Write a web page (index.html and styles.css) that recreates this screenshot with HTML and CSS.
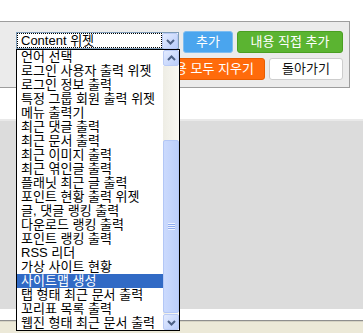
FILE: index.html
```html
<!DOCTYPE html>
<html lang="ko">
<head>
<meta charset="utf-8">
<title>위젯 추가</title>
<link rel="stylesheet" href="styles.css">
</head>
<body>
<div class="page">
  <div class="top-gap"></div>
  <div class="toolbar">
    <div class="select">
      <span class="select-value"><span class="focus">Content 위젯</span></span>
      <span class="sb-btn drop-btn"><svg width="13" height="13" viewBox="0 0 13 13"><path d="M3 5 L6.5 8.5 L10 5" fill="none" stroke="#4d6185" stroke-width="2"/></svg></span>
    </div>
    <div class="actions">
      <div class="row">
        <button class="btn btn-blue w-add">추가</button>
        <button class="btn btn-green w-direct">내용 직접 추가</button>
      </div>
      <div class="row">
        <button class="btn btn-orange w-clear">내용 모두 지우기</button>
        <button class="btn btn-white w-back">돌아가기</button>
      </div>
    </div>
  </div>
  <div class="gap-white"></div>
  <div class="editor"></div>
  <div class="gap-bottom"></div>
  <div class="statusbar"></div>

  <div class="listbox">
    <ul class="options">
      <li>언어 선택</li>
      <li>로그인 사용자 출력 위젯</li>
      <li>로그인 정보 출력</li>
      <li>특정 그룹 회원 출력 위젯</li>
      <li>메뉴 출력기</li>
      <li>최근 댓글 출력</li>
      <li>최근 문서 출력</li>
      <li>최근 이미지 출력</li>
      <li>최근 엮인글 출력</li>
      <li>플래닛 최근 글 출력</li>
      <li>포인트 현황 출력 위젯</li>
      <li>글, 댓글 랭킹 출력</li>
      <li>다운로드 랭킹 출력</li>
      <li>포인트 랭킹 출력</li>
      <li>RSS 리더</li>
      <li>가상 사이트 현황</li>
      <li class="selected">사이트맵 생성</li>
      <li>탭 형태 최근 문서 출력</li>
      <li>꼬리표 목록 출력</li>
      <li>웹진 형태 최근 문서 출력</li>
    </ul>
    <div class="scrollbar">
      <span class="sb-btn"><svg width="13" height="13" viewBox="0 0 13 13"><path d="M3 8 L6.5 4.5 L10 8" fill="none" stroke="#4d6185" stroke-width="2"/></svg></span>
      <div class="track">
        <div class="track-space"></div>
        <div class="thumb"><span class="grip"></span></div>
        <div class="track-end"></div>
      </div>
      <span class="sb-btn"><svg width="13" height="13" viewBox="0 0 13 13"><path d="M3 5 L6.5 8.5 L10 5" fill="none" stroke="#4d6185" stroke-width="2"/></svg></span>
    </div>
  </div>
</div>
</body>
</html>
```

FILE: styles.css
```css
* { box-sizing: border-box; }
html, body { margin: 0; padding: 0; }
body {
  width: 363px;
  height: 333px;
  overflow: hidden;
  background: #fff;
  font-family: "Liberation Sans", "Noto Sans CJK KR", sans-serif;
  font-size: 13px;
  color: #000;
}
.page {
  position: relative;
  height: 333px;
  display: flex;
  flex-direction: column;
}
.top-gap { flex: none; height: 21px; }

.toolbar {
  flex: none;
  width: 350px;
  height: 67px;
  border: 1px solid #9d9d9d;
  border-left: 0;
  background: #ebebeb;
  display: flex;
  align-items: flex-start;
  gap: 4px;
  padding: 9px 6px 0 16px;
}

.select {
  flex: none;
  width: 163px;
  height: 17px;
  margin-top: 1px;
  border: 1px solid #7f9db9;
  background: #fff;
  display: flex;
}
.select-value {
  flex: 1;
  display: flex;
}
.focus {
  flex: 1;
  outline: 1px dotted #000;
  outline-offset: -1px;
  padding-left: 4px;
  line-height: 15px;
  white-space: nowrap;
}
.drop-btn { width: 15px; height: 15px; }

.actions {
  flex: none;
  width: 160px;
  display: flex;
  flex-direction: column;
  align-items: flex-end;
  gap: 5px;
}
.row {
  display: flex;
  gap: 4px;
}
.btn {
  flex: none;
  height: 22px;
  border-radius: 3px;
  font-family: "Liberation Sans", "Noto Sans CJK KR", sans-serif;
  font-size: 13px;
  padding: 0;
  color: #fff;
  cursor: pointer;
  line-height: 20px;
  white-space: nowrap;
}
.btn-blue { background: #4aa5ee; border: 1px solid #7dbdf1; }
.btn-green { background: #5bb431; border: 1px solid #4a9f22; }
.btn-orange { background: #ff6b0b; border: 1px solid #e85d00; padding-right: 10px; text-align: right; }
.btn-white { background: #fff; border: 1px solid #cdcdcd; color: #111; }
.w-add { width: 50px; }
.w-direct { width: 106px; }
.w-clear { width: 130px; }
.w-back { width: 74px; }

.gap-white { flex: none; height: 31px; }
.editor {
  flex: none;
  height: 190px;
  background: #dcdcdc;
  border-top: 2px solid #e9e9e9;
}
.gap-bottom { flex: none; height: 11px; }
.statusbar {
  flex: 1;
  background: #ece9d8;
  border-top: 1px solid #8f8f8f;
  box-shadow: inset 0 1px 0 #d6d3c4;
}

.listbox {
  position: absolute;
  left: 16px;
  top: 49px;
  width: 164px;
  height: 282px;
  border: 1px solid #000;
  background: #fff;
  display: flex;
}
.options {
  flex: 1;
  list-style: none;
  margin: 0;
  padding: 0;
  overflow: hidden;
}
.options li {
  height: 14px;
  line-height: 14px;
  padding-left: 4px;
  white-space: nowrap;
}
.options li.selected {
  background: #316ac5;
  color: #fff;
}

.scrollbar {
  flex: none;
  width: 16px;
  display: flex;
  flex-direction: column;
}
.sb-btn {
  flex: none;
  width: 16px;
  height: 16px;
  border: 1px solid #bacbf5;
  border-radius: 2px;
  background: linear-gradient(135deg, #e3ebfe, #b9cdfb);
  display: flex;
  align-items: center;
  justify-content: center;
}
.track {
  flex: 1;
  display: flex;
  flex-direction: column;
  background: linear-gradient(90deg, #eeede5, #f9f8f3);
}
.track-space { flex: 1; }
.thumb {
  flex: none;
  height: 173px;
  border: 1px solid #b3c7f6;
  border-radius: 2px;
  background: linear-gradient(90deg, #cbdafd, #bccffb);
  display: flex;
  align-items: center;
  justify-content: center;
}
.grip {
  width: 7px;
  height: 7px;
  background: repeating-linear-gradient(180deg, #eef3fe 0 1px, #8eabf0 1px 2px);
}
.track-end { flex: none; height: 1px; }
```
